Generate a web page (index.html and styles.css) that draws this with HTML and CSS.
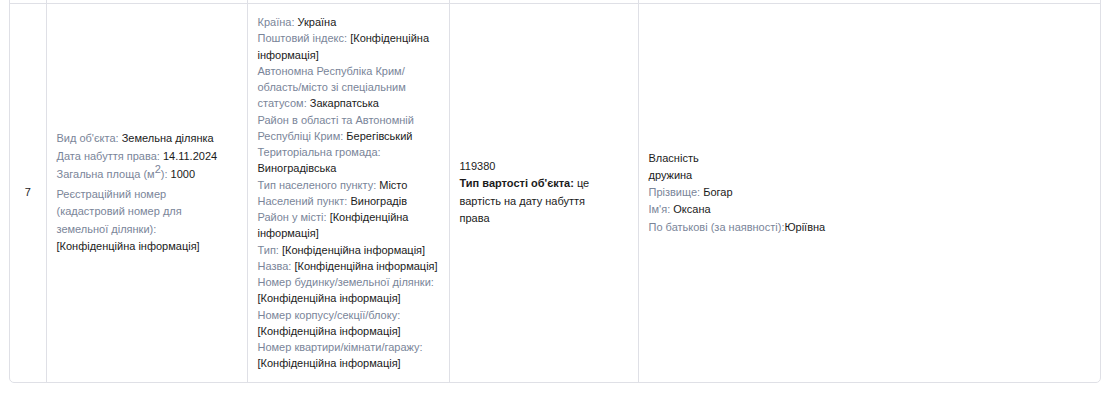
FILE: index.html
```html
<!DOCTYPE html>
<html lang="uk">
<head>
<meta charset="utf-8">
<title>Об'єкти</title>
<link rel="stylesheet" href="styles.css">
</head>
<body>
<div class="wrap">
  <table class="grid">
    <colgroup>
      <col class="c1"><col class="c2"><col class="c3"><col class="c4"><col class="c5">
    </colgroup>
    <tr class="prev"><td></td><td></td><td></td><td></td><td></td></tr>
    <tr class="row">
      <td class="num">7</td>
      <td class="obj">
        <div><span class="lbl">Вид об'єкта:</span> Земельна ділянка</div>
        <div><span class="lbl">Дата набуття права:</span> 14.11.2024</div>
        <div class="area"><span class="lbl">Загальна площа (м<sup>2</sup>):</span> 1000</div>
        <div class="reg"><span class="lbl">Реєстраційний номер<br>(кадастровий номер для<br>земельної ділянки):</span><br>[Конфіденційна інформація]</div>
      </td>
      <td class="addr">
        <div><span class="lbl">Країна:</span> Україна</div>
        <div><span class="lbl">Поштовий індекс:</span> [Конфіденційна інформація]</div>
        <div><span class="lbl">Автономна Республіка Крим/ область/місто зі спеціальним статусом:</span> Закарпатська</div>
        <div><span class="lbl">Район в області та Автономній Республіці Крим:</span> Берегівський</div>
        <div><span class="lbl">Територіальна громада:</span> Виноградівська</div>
        <div><span class="lbl">Тип населеного пункту:</span> Місто</div>
        <div><span class="lbl">Населений пункт:</span> Виноградів</div>
        <div><span class="lbl">Район у місті:</span> [Конфіденційна інформація]</div>
        <div><span class="lbl">Тип:</span> [Конфіденційна інформація]</div>
        <div><span class="lbl">Назва:</span> [Конфіденційна інформація]</div>
        <div><span class="lbl">Номер будинку/земельної ділянки:</span> [Конфіденційна інформація]</div>
        <div><span class="lbl">Номер корпусу/секції/блоку:</span> [Конфіденційна інформація]</div>
        <div><span class="lbl">Номер квартири/кімнати/гаражу:</span> [Конфіденційна інформація]</div>
      </td>
      <td class="cost">
        <div>119380</div>
        <div><b>Тип вартості об'єкта:</b> це вартість на дату набуття<br>права</div>
      </td>
      <td class="owner">
        <div>Власність</div>
        <div>дружина</div>
        <div><span class="lbl">Прізвище:</span> Богар</div>
        <div><span class="lbl">Ім'я:</span> Оксана</div>
        <div><span class="lbl">По батькові (за наявності):</span>Юріївна</div>
      </td>
    </tr>
  </table>
</div>
</body>
</html>
```

FILE: styles.css
```css
html, body {
  margin: 0;
  padding: 0;
  background: #ffffff;
}
body {
  font-family: "Liberation Sans", Arial, sans-serif;
  font-size: 11px;
  color: #1b1b1b;
  padding: 0 7px 0 9px;
  overflow: hidden;
}
.wrap {
  margin-top: -20px;
  border: 1px solid #dfe0e6;
  border-radius: 0 0 5px 5px;
  overflow: hidden;
}
.grid {
  width: 100%;
  border-collapse: collapse;
  table-layout: fixed;
}
.c1 { width: 36px; }
.c2 { width: 201px; }
.c3 { width: 202px; }
.c4 { width: 189px; }
.c5 { width: auto; }
.grid td {
  border-left: 1px solid #dfe0e6;
  padding: 10px 10px;
  vertical-align: middle;
  line-height: 17.3px;
}
.grid td:first-child { border-left: none; }
.prev td {
  height: 22px;
  padding: 0;
  border-bottom: 1px solid #dfe0e6;
}
.grid td.num { text-align: center; padding: 10px 6px; }
.lbl { color: #7a8599; }
.obj .area { line-height: 19px; }
.obj sup { font-size: 1em; line-height: 0; vertical-align: 0.5em; }
.obj .reg { margin-top: 2px; }
.grid td.addr { line-height: 16.25px; padding-right: 7px; }
.cost b { font-weight: bold; }
```
